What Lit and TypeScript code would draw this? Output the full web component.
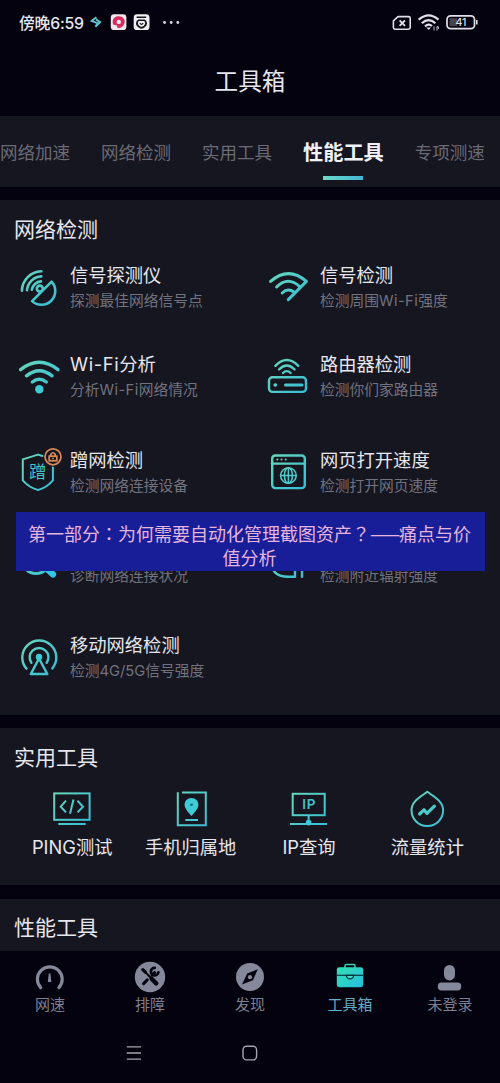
import { LitElement, html, svg, css } from "lit";
import { customElement, property } from "lit/decorators.js";
import { classMap } from "lit/directives/class-map.js";

const grad = (id: string, size = 40) => svg`<defs><linearGradient id=${id} gradientUnits="userSpaceOnUse" x1="0" y1="0" x2=${size} y2=${size}>
  <stop offset="0.1" stop-color="#67d6ba"></stop><stop offset="0.9" stop-color="#38bed5"></stop></linearGradient></defs>`;

const icons: Record<string, unknown> = {
  dish: svg`<g class="l" stroke-width="2.6"><path d="M3.9 23.6A20 20 0 0 1 23.3 4.2M9 23.2A15 15 0 0 1 23.3 9.4M13.8 22.8A10 10 0 0 1 23 14.4"/>
    <circle cx="21.8" cy="21.6" r="3"/><path d="M33.6 14.6L14.1 34.1A13.8 13.8 0 0 0 33.6 14.6Z"/></g>`,
  signal: svg`<g class="l" stroke-width="3"><path d="M2.6 14.4Q20.5-1.2 38.4 14.4L20.3 32.6M8.6 20Q20 8.6 32 19.8M14.2 26Q19.7 20.6 26 25"/></g>`,
  wifi: svg`<g class="l" stroke-width="3.4"><path d="M2.6 13.6Q21.3-1 40 13.6M8.5 19.8Q21.3 9.6 34.1 19.8M14.3 26Q21.3 20.4 28.3 26"/></g><circle class="f" cx="21.3" cy="33.3" r="4.2"/>`,
  router: svg`<g class="l" stroke-width="2.4"><path d="M7.4 9.8Q18.8-1.6 30.3 9.8M11 13.5Q18.8 5.6 26.6 13.5M15 17Q18.8 13.2 22.6 17"/><rect x="1" y="21.3" width="37" height="14.6" rx="3.5"/><path d="M17.5 29H34" stroke-width="3"/><path d="M7.2 29H7.4" stroke-width="3.6"/></g>`,
  shield: svg`<g class="l" stroke-width="2"><path d="M24.5 4L20 2.6L4.8 7.4V28.4Q11 35.6 20 38Q29 35.6 34.9 28.4V15.5"/></g><text x="19.7" y="25.6" class="ic">蹭</text>
    <g fill="none" stroke="#d98a58" stroke-width="1.7"><circle cx="35" cy="4.8" r="8"/><rect x="31.2" y="4.2" width="7.6" height="4.6"/><path d="M32.8 4V2.5Q35-1 37.2 2.5V4M34.2 6.5H35.8"/></g>`,
  browser: svg`<g class="l" stroke-width="2.4"><rect x="4.2" y="3.5" width="32.6" height="32.6" rx="3"/><path d="M4 11.6H37"/><path d="M9.3 7.6H9.4M13.5 7.6H13.6M17.7 7.6H17.8" stroke-width="2"/>
    <g stroke-width="1.6"><circle cx="20.4" cy="23.5" r="7.8"/><ellipse cx="20.4" cy="23.5" rx="4" ry="7.8"/><path d="M12.6 23.5H28.2M20.4 15.7V31.3"/></g></g>`,
  diagnose: svg`<g class="l" stroke-width="3"><circle cx="18" cy="17.5" r="14"/><path d="M29 27L35 32.4" stroke="#2dc9e6" stroke-width="6.2"/></g>`,
  radiate: svg`<g class="l" stroke-width="2.4"><path d="M4 21Q4 34.7 20 34.7H27V24M34 24V34.8"/></g>`,
  tower: svg`<g class="l" stroke-width="2.4"><path d="M8.5 31.7A17 17 0 1 1 34.3 31.4M13.4 25.8A9.4 9.4 0 1 1 28.7 25.8M21 21.5L12.8 37H29.3Z"/></g><circle class="f" cx="21" cy="20" r="3.2"/>`,
  ping: svg`<g class="l sq" stroke-width="2"><rect x="2.2" y="5.4" width="35.4" height="26.4"/><path d="M6.3 36H33.7"/><path d="M14 12.7L8.7 18.7L14 24.4M21.5 11.6L18 25.7M25.5 12.7L31 18.7L25.5 24.4"/></g>`,
  place: svg`<g class="l sq" stroke-width="2"><path d="M11 4.6H34.8V37.3H6.8V4.3M14.3 32H27"/></g><path class="f" d="M20.5 10C24.7 10 27.4 13 27.4 16.8C27.4 20.6 23.5 24.6 20.5 28C17.5 24.6 13.6 20.6 13.6 16.8C13.6 13 16.3 10 20.5 10Z"/><circle cx="20.5" cy="16.8" r="1.4" fill="#167080"/>`,
  ip: svg`<g class="l sq" stroke-width="2"><rect x="3.7" y="5.8" width="32" height="21.4"/><path d="M19.6 27.2V36M1 36H38"/></g><circle class="f" cx="19.6" cy="34.6" r="2.8"/><text x="20.2" y="21" class="ip">IP</text>`,
  flow: svg`<g class="l" stroke-width="2"><path d="M20.3 3.8C15 8 4.5 12.5 4.5 22.3A15.8 15.8 0 0 0 36.1 22.3C36.1 12.5 25.6 8 20.3 3.8Z"/><path d="M12.6 26L17 21.8L20 25.4L27.4 18.2" stroke-width="3.2"/></g>`,
};

@customElement("tool-icon")
class ToolIcon extends LitElement {
  @property() name = "";
  static styles = css`
    :host { display: block; width: 40px; height: 40px; flex: none; }
    svg { display: block; width: 40px; height: 40px; overflow: visible; }
    .l { fill: none; stroke: url(#g); stroke-linecap: round; stroke-linejoin: round; }
    .sq { stroke-linecap: butt; stroke-linejoin: miter; }
    .f { fill: #3ecbd5; }
    .ic { font: 17px "Noto Sans CJK SC", sans-serif; fill: #43c3c8; text-anchor: middle; }
    .ip { font: 600 13.5px Inter, sans-serif; fill: #45c4cb; text-anchor: middle; letter-spacing: .6px; }
  `;
  render() {
    return html`<svg viewBox="0 0 40 40">${grad("g")}${icons[this.name]}</svg>`;
  }
}

const navIcons = [
  svg`<path d="M6.7 26.6A12.4 12.4 0 1 1 24.9 26.6" fill="none" stroke="#85879a" stroke-width="3.2" stroke-linecap="round"/><path d="M14.8 12.4H16.4L17.4 21H13.8Z" fill="#85879a"/>`,
  svg`<circle cx="16" cy="16" r="15.2" fill="#85879a"/><g stroke="#050310" fill="none" stroke-linecap="round"><path d="M9.6 9.4L17 17" stroke-width="2"/><path d="M8.8 8.6L11.4 11.2" stroke-width="3.2"/><path d="M17.6 17.8L22.2 22.4" stroke-width="4.4"/><path d="M9.6 22.6L13.3 18.9M18 14.2L20.6 11.6" stroke-width="3"/><path d="M20.8 6.8A3.8 3.8 0 1 0 24.4 11.4" stroke-width="2.7"/></g>`,
  svg`<circle cx="16" cy="16" r="14" fill="#85879a"/><path d="M23.8 8.3L18.9 19.2L8 23.4L13.2 12.5Z" fill="#050310"/><circle cx="16" cy="16.2" r="2.1" fill="#85879a"/>`,
  svg`<path d="M11 7V4.8Q11 3.4 12.4 3.4H19.6Q21 3.4 21 4.8V7" fill="none" stroke="#43cfb8" stroke-width="1.5"/><rect x="2.8" y="6.2" width="26.4" height="20" rx="2.4" fill="url(#case)"/><path d="M2.8 14.3H29.2" stroke="#07363d" stroke-width="1.2"/><path d="M12.4 14.3A3.6 3.6 0 0 0 19.6 14.3Z" fill="#3ce2cb" stroke="#07363d" stroke-width="1.3"/>
    <defs><linearGradient id="case" x2="1" y2="1"><stop stop-color="#35dfb2"></stop><stop offset="1" stop-color="#25bee1"></stop></linearGradient></defs>`,
  svg`<rect x="10" y="4" width="11" height="15.4" rx="5.4" fill="#85879a"/><rect x="3.8" y="21.4" width="23.4" height="8" rx="3.6" fill="#85879a"/>`,
];

@customElement("app-root")
class AppRoot extends LitElement {
  static styles = css`
    :host { display: block; font-family: Inter, "Noto Sans CJK SC", sans-serif; color: #e6e6ee; }
    .screen { position: relative; display: flex; flex-direction: column; width: 500px; height: 1083px; overflow: hidden; background: #04020f; white-space: nowrap; }
    .panel { background: #161620; margin-bottom: 13px; flex: none; box-sizing: border-box; }
    .status { height: 44px; display: flex; align-items: center; padding: 0 22px 0 19px; box-sizing: border-box; flex: none; }
    .time { font-size: 15.8px; font-weight: 500; letter-spacing: -.2px; width: 69px; }
    .status svg { display: block; }
    .push { margin-left: auto; }
    .title { height: 72px; line-height: 76px; font-size: 23.6px; text-align: center; flex: none; }
    .tabs { height: 71px; display: flex; gap: 31px; }
    .tab { font-size: 17.5px; color: #6a6a75; line-height: 74px; }
    .tab.on { font-size: 20.2px; font-weight: 700; color: #f0f0f6; display: flex; flex-direction: column; align-items: center; }
    .tab.on i { width: 40px; height: 4px; margin-top: -14px; background: linear-gradient(90deg, #6cdcc8, #43b5d5); }
    .tests { height: 515px; }
    h2 { margin: 0; padding-left: 14px; font-size: 21px; font-weight: 400; line-height: 60px; height: 63px; }
    .grid { display: grid; grid-template-columns: 250px 250px; grid-template-rows: 89px 96px 90px 95px 60px; align-items: start; }
    .item { display: flex; padding-left: 18px; gap: 12px; }
    .item tool-icon { margin-top: 4px; }
    .name { height: 25px; line-height: 24px; font-size: 18.3px; }
    .desc { line-height: 26px; font-size: 14.75px; color: #72727e; }
    .name .lat { letter-spacing: .65px; }
    .desc .wide { letter-spacing: .4px; }
    .common { height: 157px; }
    .tools { display: grid; grid-template-columns: repeat(4, 118.4px); padding-left: 13px; margin-top: -3px; }
    .tool { display: flex; flex-direction: column; align-items: center; font-size: 18.3px; line-height: 38px; }
    .perf { height: 52px; margin: 1px 0 0; }
    .perf h2 { line-height: 58px; height: 52px; }
    .nav { display: grid; grid-template-columns: repeat(5, 100px); padding-top: 10px; height: 70px; box-sizing: border-box; flex: none; }
    .entry { display: flex; flex-direction: column; align-items: center; font-size: 15px; line-height: 24px; color: #7d7f91; }
    .entry svg { display: block; width: 32px; height: 32px; }
    .entry.on { color: #61acc9; }
    .keys { display: flex; padding-left: 126px; gap: 100px; }
    .caption { position: absolute; left: 16px; top: 512px; width: 469px; height: 59px; box-sizing: border-box; padding: 9px 2px 0 0; background: #181e98; color: #e5b5dd; font: 18px/24px "Noto Sans CJK SC", sans-serif; text-align: center; }
    .tc { font-family: "Noto Sans CJK TC", sans-serif; }
    .dash { letter-spacing: -1.1px; }
  `;

  private tabs = ["网络加速", "网络检测", "实用工具", "性能工具", "专项测速"];
  private items = [
    ["dish", "信号探测仪", "探测最佳网络信号点"],
    ["signal", "信号检测", "检测周围Wi-Fi强度"],
    ["wifi", "Wi-Fi分析", "分析Wi-Fi网络情况"],
    ["router", "路由器检测", "检测你们家路由器"],
    ["shield", "蹭网检测", "检测网络连接设备"],
    ["browser", "网页打开速度", "检测打开网页速度"],
    ["diagnose", "", "诊断网络连接状况"],
    ["radiate", "", "检测附近辐射强度"],
    ["tower", "移动网络检测", "检测4G/5G信号强度"],
  ];
  private tools = [["ping", "PING测试"], ["place", "手机归属地"], ["ip", "IP查询"], ["flow", "流量统计"]];
  private nav = ["网速", "排障", "发现", "工具箱", "未登录"];

  private mixed(text: string) {
    return text.split(/(Wi-Fi)/).map((p) => (p === "Wi-Fi" ? html`<span class="lat wide">${p}</span>` : p));
  }

  render() {
    return html`<div class="screen">
      <div class="status">
        <span class="time">傍晚6:59</span>
        <svg width="96" height="20" viewBox="88 12 96 20">
          <path d="M96.4 17.2L91.6 21L98 23.4L95.4 26.4M96 19.4L100.2 22.2L95.4 26.8" fill="none" stroke="#62c2cc" stroke-width="1.9"/>
          <rect x="110.8" y="14.3" width="15.6" height="15.8" rx="3.4" fill="#f2e6ec"/>
          <path d="M118 16.2C123 16 125.5 19.5 124.5 23C123.6 26.5 120.5 28.4 117.5 28L117 25.6L113.5 24.8C111.2 20.5 114 16.4 118 16.2Z" fill="#d62c5d"/><circle cx="118.8" cy="21.9" r="2.2" fill="#f7e8ee"/>
          <rect x="133.7" y="14.3" width="15.8" height="15.8" rx="3.4" fill="#f0f0f2"/>
          <path d="M136.6 17.3H146.2M138 20.2H145" stroke="#15141c" stroke-width="1.6"/><path d="M138 20.5A4.4 4.4 0 1 0 145 20.5" fill="none" stroke="#15141c" stroke-width="1.8"/><path d="M139.8 23.2Q141.5 25.4 143.2 23.2" fill="none" stroke="#15141c" stroke-width="1.2"/>
          <g fill="#dcdce4"><circle cx="164.6" cy="22.5" r="1.4"/><circle cx="171.2" cy="22.5" r="1.4"/><circle cx="177.8" cy="22.5" r="1.4"/></g>
        </svg>
        <svg class="push" width="88" height="20" viewBox="390 12 88 20">
          <g fill="none" stroke="#e0e0e8" stroke-width="1.6"><path d="M398 16.6H408.6Q410.2 16.6 410.2 18.2V27.6Q410.2 29.2 408.6 29.2H395Q393.4 29.2 393.4 27.6V20.8Z" stroke-linejoin="round"/><path d="M399.6 20.3L405 25.8M405 20.3L399.6 25.8" stroke-width="1.9"/>
          <g stroke-width="2.2"><path d="M418.7 19.6Q428.6 11.2 438.5 19.6M421.8 23.2Q428.6 17.2 435.4 23.2M425 26.4Q428.6 23.2 432 26"/></g>
          <rect x="447" y="15.8" width="27.5" height="12.8" rx="3.6" stroke-width="1.7"/></g>
          <path d="M426.4 27.4L428.7 30L431 27.4Z M476 20H477.6V24.4H476Z" fill="#e0e0e8"/><path d="M434 26.5V30.5M437 26.5V30.5M437 26.8H438.4V29" stroke="#c4c4cc" stroke-width="1" fill="none"/>
          <rect x="449.5" y="18.2" width="8" height="8" fill="#45444e"/>
          <text x="461" y="26" text-anchor="middle" font-size="10.5" font-weight="500" fill="#e0e0e8">41</text>
        </svg>
      </div>
      <div class="title">工具箱</div>
      <div class="panel tabs">
        ${this.tabs.map((t, i) => html`<div class=${classMap({ tab: true, on: i === 3 })}>${t}${i === 3 ? html`<i></i>` : ""}</div>`)}
      </div>
      <section class="panel tests">
        <h2>网络检测</h2>
        <div class="grid">
          ${this.items.map(([icon, name, desc]) => html`<div class="item"><tool-icon name=${icon}></tool-icon><div><div class="name">${this.mixed(name)}</div><div class="desc">${this.mixed(desc)}</div></div></div>`)}
        </div>
      </section>
      <section class="panel common">
        <h2>实用工具</h2>
        <div class="tools">${this.tools.map(([icon, name]) => html`<div class="tool"><tool-icon name=${icon}></tool-icon><span>${name}</span></div>`)}</div>
      </section>
      <section class="panel perf"><h2>性能工具</h2></section>
      <nav class="nav">
        ${this.nav.map((n, i) => html`<div class=${classMap({ entry: true, on: i === 3 })}><svg viewBox="0 0 32 32">${navIcons[i]}</svg><span>${n}</span></div>`)}
      </nav>
      <div class="keys">
        <svg width="16" height="62" viewBox="0 0 16 62"><path d="M.8 25.8H15M.8 32H15M.8 38.2H15" stroke="#a6a5ad" stroke-width="1.3"/></svg>
        <svg width="16" height="62" viewBox="0 0 16 62"><rect x="1" y="25.3" width="13.6" height="13.6" rx="3.6" fill="none" stroke="#a6a5ad" stroke-width="1.4"/></svg>
      </div>
      <div class="caption">第一部分<span class="tc">：</span>为何需要自动化管理截图资产<span class="tc">？</span><span class="dash">——</span>痛点与价<br>值分析</div>
    </div>`;
  }
}
